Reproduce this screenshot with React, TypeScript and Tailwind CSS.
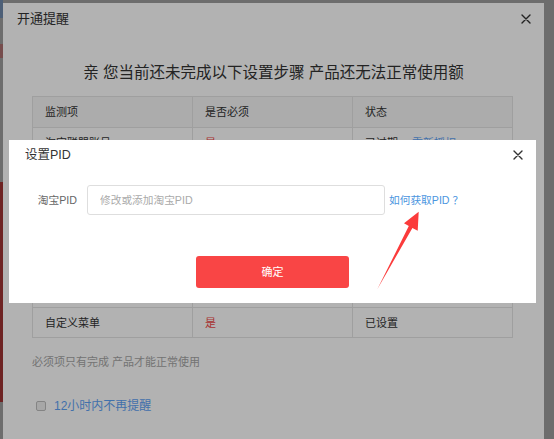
import React from "react";

const rows: { item: string; required: boolean; status: string; action?: string }[] = [
  { item: "淘宝联盟账号", required: true, status: "已过期", action: "重新授权" },
  { item: "淘宝PID", required: true, status: "未设置" },
  { item: "微信公众号", required: true, status: "已绑定" },
  { item: "商品采集", required: false, status: "已设置" },
  { item: "自动回复", required: false, status: "已设置" },
  { item: "推广位", required: false, status: "已设置" },
  { item: "自定义菜单", required: true, status: "已设置" },
];

function CloseIcon() {
  return (
    <svg width="10" height="10" viewBox="0 0 10 10" className="block">
      <path d="M1 1L9 9M9 1L1 9" stroke="#333" strokeWidth="1.4" strokeLinecap="round" />
    </svg>
  );
}

function RemindDialog() {
  return (
    <div className="absolute left-[3px] top-[3px] h-[480px] w-[541px] bg-white text-[#333]">
      <div className="flex h-[32px] items-center justify-between pl-[14px] pr-[13px]">
        <span className="text-[13px] leading-[18px]">开通提醒</span>
        <CloseIcon />
      </div>

      <div className="px-[29px]">
        <h2 className="mt-[27px] text-center text-[15.5px] leading-[22px]">
          亲 您当前还未完成以下设置步骤 产品还无法正常使用额
        </h2>

        <div className="mt-[12px] w-[481px] border-l border-t border-[#e4e4e4] text-[11px] leading-[16px]">
          <div className="grid grid-cols-3 bg-[#f6f6f6]">
            <div className="flex h-[31px] items-center border-b border-r border-[#e4e4e4] px-[12px]">监测项</div>
            <div className="flex h-[31px] items-center border-b border-r border-[#e4e4e4] px-[12px]">是否必须</div>
            <div className="flex h-[31px] items-center border-b border-r border-[#e4e4e4] px-[12px]">状态</div>
          </div>
          {rows.map((row) => (
            <div key={row.item} className="grid grid-cols-3">
              <div className="flex h-[30px] items-center border-b border-r border-[#e4e4e4] px-[12px]">{row.item}</div>
              <div
                className={
                  row.required
                    ? "flex h-[30px] items-center border-b border-r border-[#e4e4e4] px-[12px] text-[#f04848]"
                    : "flex h-[30px] items-center border-b border-r border-[#e4e4e4] px-[12px]"
                }
              >
                {row.required ? "是" : "否"}
              </div>
              <div className="flex h-[30px] items-center border-b border-r border-[#e4e4e4] px-[12px]">
                {row.status}
                {row.action ? <span className="ml-[14px] text-[#5ea2f5]">{row.action}</span> : null}
              </div>
            </div>
          ))}
        </div>

        <p className="mt-[16px] text-[11px] leading-[16px] text-[#a6a6a6]">必须项只有完成 产品才能正常使用</p>

        <label className="mt-[28px] flex h-[16px] items-center">
          <span className="ml-[4px] block h-[10px] w-[10px] rounded-[2px] border border-[#bdbdbd] bg-[#f0f0f0]" />
          <span className="ml-[8px] text-[12px] leading-[16px] text-[#5ea2f5]">12小时内不再提醒</span>
        </label>
      </div>
    </div>
  );
}

function PidDialog() {
  return (
    <div className="absolute left-[9px] top-[140px] h-[163px] w-[527px] bg-white text-[#333]">
      <div className="flex h-[30px] items-center justify-between pl-[16px] pr-[13px]">
        <span className="text-[12.5px] leading-[18px]">设置PID</span>
        <CloseIcon />
      </div>

      <div className="mt-[15px] flex items-center pl-[18px] text-[10.7px]">
        <span className="w-[50px] text-right leading-[16px] text-[#666]">淘宝PID</span>
        <input
          className="ml-[10px] h-[30px] w-[298px] rounded-[3px] border border-[#dedede] px-[12px] leading-[16px] outline-none placeholder:text-[#aaa]"
          placeholder="修改或添加淘宝PID"
        />
        <a className="ml-[4px] leading-[16px] text-[#4b95e0]">
          如何获取PID<span className="ml-[3px]">？</span>
        </a>
      </div>

      <button className="mx-auto mt-[41px] block h-[32px] w-[153px] rounded-[3px] bg-[#f94545] text-[11px] text-white">
        确定
      </button>
    </div>
  );
}

export default function App() {
  return (
    <div className="relative h-[439px] w-[554px] overflow-hidden font-['Liberation_Sans','Noto_Sans_CJK_SC',sans-serif]">
      <div className="flex h-full">
        <div className="flex w-[3px] flex-col">
          <div className="h-[18px] bg-[#9fc3f5]" />
          <div className="h-[26px] bg-[#e0e0e0]" />
          <div className="h-[14px] bg-[#f2a0a0]" />
          <div className="h-[124px] bg-[#e0e0e0]" />
          <div className="h-[220px] bg-[#e24a4a]" />
          <div className="flex-1 bg-[#e0e0e0]" />
        </div>
        <div className="flex-1 bg-[#e0e0e0]" />
      </div>

      <div className="absolute inset-0 bg-black/30" />
      <RemindDialog />
      <div className="absolute inset-0 bg-black/30" />
      <PidDialog />

      <svg className="pointer-events-none absolute left-0 top-0" width="554" height="439" viewBox="0 0 554 439">
        <polygon
          points="418.7,211.7 417.7,230.7 412.4,227.9 377.3,289.3 408.8,226.1 404,223.3"
          fill="#fb3b3b"
        />
      </svg>
    </div>
  );
}
